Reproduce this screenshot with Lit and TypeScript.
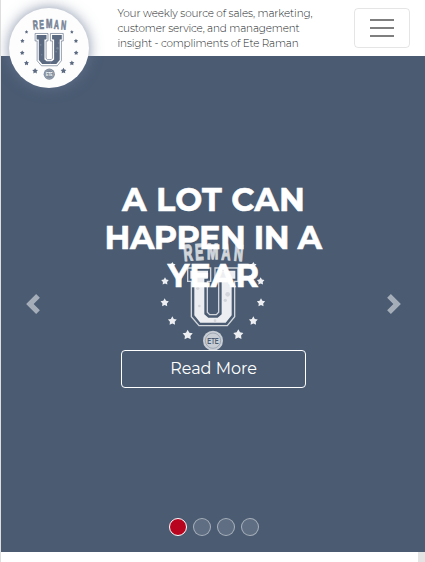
import { LitElement, html, css, svg } from "lit";
import { customElement, property } from "lit/decorators.js";

type Star = [number, number, number];

const STARS: Star[] = [
  [67, 91, 10], [45, 139, 12], [44, 203, 13], [67, 258, 14], [113, 300, 16],
  [265, 299, 16], [310, 258, 14], [333, 203, 13], [332, 139, 12], [310, 91, 10],
];

const LETTERS: [string, number, number, number][] = [
  ["R", 116, 77, -5], ["E", 149, 74, -3], ["M", 188, 72, 0], ["A", 227, 74, 3], ["N", 264, 77, 5],
];

function starPoints([cx, cy, r]: Star): string {
  return Array.from({ length: 10 }, (_, i) => {
    const a = (Math.PI / 5) * i - Math.PI / 2;
    const d = i % 2 ? r * 0.54 : r;
    return `${(cx + d * Math.cos(a)).toFixed(1)},${(cy + d * Math.sin(a)).toFixed(1)}`;
  }).join(" ");
}

@customElement("reman-crest")
export class RemanCrest extends LitElement {
  static styles = css`
    :host { display: block; }
    svg { display: block; width: 100%; height: 100%; }
    text { font-family: "Liberation Sans", Arial, sans-serif; font-weight: 700; }
    .letter { font-size: 68px; fill: currentColor; stroke: currentColor; stroke-width: 4; }
    .ete { font-size: 27px; fill: var(--crest-back); }
  `;

  render() {
    return html`<svg viewBox="0 0 390 360" aria-label="Reman U">
      <g opacity="0.75">
        ${LETTERS.map(([c, x, y, r]) => svg`
          <text class="letter" text-anchor="middle"
            transform="translate(${x} ${y}) rotate(${r}) scale(${c === "M" ? 0.6 : 0.55} 1)">${c}</text>`)}
      </g>
      <g fill="currentColor" opacity="0.9">
        ${STARS.map((s) => svg`<polygon points=${starPoints(s)} />`)}
        <path d="M121 107H174V131H163V238L175 248H203L215 238V131H204V107H256V131H245V241L227 263H151L133 241V131H121Z" />
      </g>
      <path fill="var(--crest-back)" d="M172 131H206V232L199 239H179L172 232Z" />
      <path fill="none" stroke="currentColor" stroke-width="4" opacity="0.75"
        d="M113 99H182V139H172V232L179 239H199L206 232V139H195V99H264V139H254V245L232 272H147L124 245V139H113Z" />
      <g fill="var(--crest-back)" opacity="0.16">
        <circle cx="143" cy="160" r="5" /><circle cx="148" cy="213" r="4" />
        <circle cx="233" cy="178" r="7" /><circle cx="226" cy="196" r="5" />
        <circle cx="240" cy="150" r="4" /><circle cx="195" cy="257" r="4" />
      </g>
      <circle cx="189" cy="317" r="30" fill="currentColor" opacity="0.7" />
      <circle cx="189" cy="317" r="23" fill="none" stroke="var(--crest-back)" stroke-width="2" opacity="0.5" />
      <text class="ete" x="189" y="327" text-anchor="middle" textLength="34" lengthAdjust="spacingAndGlyphs">ETE</text>
    </svg>`;
  }
}

@customElement("slide-dots")
export class SlideDots extends LitElement {
  @property({ type: Number }) count = 4;
  @property({ type: Number }) active = 0;

  static styles = css`
    :host { display: flex; justify-content: center; gap: 6px; }
    .dot {
      box-sizing: border-box; width: 18px; height: 18px; border-radius: 50%;
      border: 1px solid rgba(255, 255, 255, 0.45); background: rgba(255, 255, 255, 0.12);
    }
    .dot.on { background: #b8041f; border-color: #fff; }
  `;

  render() {
    return Array.from({ length: this.count }, (_, i) =>
      html`<span class="dot ${i === this.active ? "on" : ""}"></span>`);
  }
}

@customElement("app-root")
export class AppRoot extends LitElement {
  static styles = css`
    :host {
      display: block; box-sizing: border-box; height: 562px; overflow: hidden;
      border-left: 1px solid #dedede; background: #fff;
      font-family: Montserrat, Inter, "Open Sans", sans-serif;
    }
    header {
      position: relative; box-sizing: border-box; height: 56px; display: flex;
      align-items: flex-start; justify-content: space-between; padding: 8px 15px 0 116.5px;
    }
    .brand {
      position: absolute; z-index: 2; left: 8px; top: 8px; width: 80px; height: 80px;
      box-sizing: border-box; padding: 7.4px 0 0 5px; border-radius: 50%; background: #fdfdfe;
      box-shadow: 0 0 14px rgba(105, 120, 148, 0.8);
      color: #4a5b74; --crest-back: #fff;
    }
    .brand reman-crest { width: 72.8px; height: 67.2px; }
    .tagline { margin: -2px 0 0; font-size: 10.4px; line-height: 15px; font-weight: 300; color: #212529; }
    .tagline span { display: block; width: max-content; white-space: nowrap; letter-spacing: -0.15px; }
    .tagline span:first-child { letter-spacing: -0.11px; }
    .menu {
      box-sizing: border-box; width: 56px; height: 40px; border: 1px solid rgba(0, 0, 0, 0.1);
      border-radius: 4px; display: flex; flex-direction: column; align-items: center;
      justify-content: center; gap: 6px; padding: 0; background: none;
    }
    .menu i { width: 24px; height: 2px; background: #7f7f7f; }
    .hero {
      position: relative; box-sizing: border-box; height: 496px; background: #4a5b72; color: #fff;
      display: flex; flex-direction: column; align-items: center; padding-top: 125px;
    }
    .mark { position: absolute; left: 149px; top: 179px; width: 130px; height: 120px; --crest-back: #4a5b72; }
    h1 {
      position: relative; margin: 0 0 0 1px; font-size: 32px; line-height: 38px; font-weight: 700;
      text-align: center; -webkit-text-stroke: 0.5px #fff;
    }
    h1 span { display: block; white-space: nowrap; letter-spacing: 0.2px; }
    h1 span:nth-child(2) { letter-spacing: -0.55px; margin-left: -1px; }
    .more {
      position: relative; box-sizing: border-box; width: 185px; height: 38px; margin-top: 55px;
      border: 1px solid #fff; border-radius: 4px; font-size: 16px; line-height: 36px;
      text-align: center; margin-left: 1px; color: #fff; text-decoration: none;
    }
    .arrows {
      position: absolute; inset: 0; display: flex; justify-content: space-between;
      align-items: center; padding: 0 21px 0 22px; opacity: 0.5;
    }
    .arrows svg { width: 20px; height: 20px; fill: #fff; }
    slide-dots { position: absolute; left: 0; right: 0; bottom: 16px; margin-left: 2px; }
    .below { display: flex; justify-content: flex-end; height: 10px; }
    .track { width: 7px; background: #e4e4e4; }
  `;

  render() {
    return html`
      <header>
        <a class="brand"><reman-crest></reman-crest></a>
        <p class="tagline">
          <span>Your weekly source of sales, marketing,</span>
          <span>customer service, and management</span>
          <span>insight - compliments of Ete Raman</span>
        </p>
        <button class="menu" aria-label="Menu"><i></i><i></i><i></i></button>
      </header>
      <section class="hero">
        <reman-crest class="mark"></reman-crest>
        <h1>
          <span>A LOT CAN</span>
          <span>HAPPEN IN A</span>
          <span>YEAR</span>
        </h1>
        <a class="more">Read More</a>
        <div class="arrows">
          <svg viewBox="0 0 8 8"><path d="M5.25 0l-4 4 4 4 1.5-1.5-2.5-2.5 2.5-2.5-1.5-1.5z" /></svg>
          <svg viewBox="0 0 8 8"><path d="M2.75 0l-1.5 1.5 2.5 2.5-2.5 2.5 1.5 1.5 4-4-4-4z" /></svg>
        </div>
        <slide-dots count="4" active="0"></slide-dots>
      </section>
      <div class="below"><div class="track"></div></div>
    `;
  }
}
